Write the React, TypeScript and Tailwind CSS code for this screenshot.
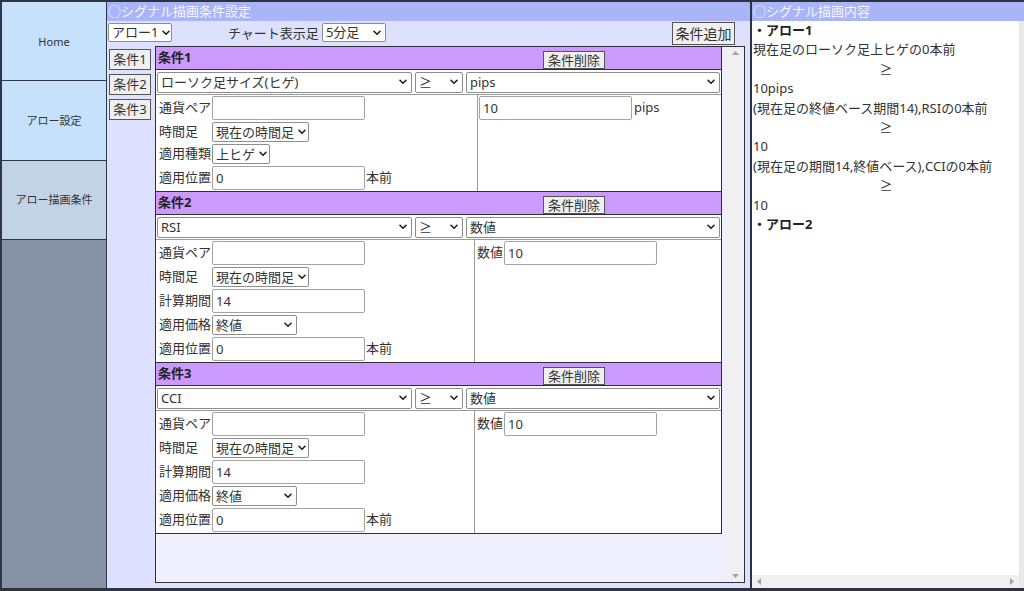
import React from "react";

type Props = { children?: React.ReactNode; className?: string };

function Chevron() {
  return (
    <svg width="8" height="6" viewBox="0 0 8 6" className="shrink-0">
      <path d="M1 1.3 L4 4.3 L7 1.3" fill="none" stroke="#1f1f1f" strokeWidth="1.6" strokeLinecap="round" strokeLinejoin="round" />
    </svg>
  );
}

function Select({ value, className = "" }: { value: string; className?: string }) {
  return (
    <div className={`flex shrink-0 items-center justify-between gap-1 rounded-[2px] border border-[#8d8d8d] bg-white pl-[3px] pr-[4px] text-[13px] leading-none text-[#333] ${className}`}>
      <span className="whitespace-nowrap">{value}</span>
      <Chevron />
    </div>
  );
}

function TextBox({ value = "" }: { value?: string }) {
  return (
    <input
      readOnly
      value={value}
      className="h-[24px] w-[153px] shrink-0 rounded-[2px] border border-[#a3a3a3] bg-white px-[3px] text-[13px] text-[#333] outline-none"
    />
  );
}

function Button({ children, className = "" }: Props) {
  return (
    <button className={`flex items-center justify-center border border-[#555] bg-[#efefef] text-[13px] leading-none text-[#333] ${className}`}>
      {children}
    </button>
  );
}

function Row({ label, children, suffix }: { label: string; children: React.ReactNode; suffix?: string }) {
  return (
    <div className="flex items-center">
      <span className="w-[55px] shrink-0 whitespace-nowrap pl-[2px]">{label}</span>
      {children}
      {suffix && <span className="ml-[1px]">{suffix}</span>}
    </div>
  );
}

function Condition({
  title,
  indicator,
  target,
  leftClass,
  rightClass,
  left,
  right,
}: {
  title: string;
  indicator: string;
  target: string;
  leftClass: string;
  rightClass: string;
  left: React.ReactNode;
  right: React.ReactNode;
}) {
  return (
    <div className="w-[566px] border-b border-r border-[#2f2f3a] bg-white text-[13px] text-[#333]">
      {/* header */}
      <div className="flex h-[23px] items-end border-b border-[#2f2f3a] bg-[#cc99fc]">
        <span className="self-center pl-[2px] font-bold text-[#222]">{title}</span>
        <Button className="ml-auto mr-[116px] h-[18px] w-[62px]">条件削除</Button>
      </div>
      {/* selects */}
      <div className="flex h-[25px] items-center gap-[3px] border-b border-[#9c9c9c] px-[1px]">
        <Select value={indicator} className="h-[21px] w-[255px]" />
        <Select value="≥" className="h-[21px] w-[48px]" />
        <Select value={target} className="h-[21px] w-[254px]" />
      </div>
      {/* body */}
      <div className="flex">
        <div className={`flex flex-col gap-[2px] border-r border-[#9c9c9c] py-[1px] pl-[1px] ${leftClass}`}>{left}</div>
        <div className={`flex-1 py-[1px] ${rightClass}`}>{right}</div>
      </div>
    </div>
  );
}

export default function App() {
  return (
    <div className="flex h-[591px] w-[1024px] overflow-hidden border-b-[3px] border-t-2 border-[#2d3440] [font-family:'Noto_Sans','Noto_Sans_CJK_JP',sans-serif]">
      {/* Sidebar */}
      <aside className="flex w-[107px] shrink-0 flex-col border-l-2 border-r border-[#2d3848] bg-[#8892a6] text-[11px] text-[#333]">
        <div className="flex h-[79px] items-center justify-center border-b border-[#2d3848] bg-[#c6e1fb] pt-[3px]">Home</div>
        <div className="flex h-[80px] items-center justify-center border-b border-[#2d3848] bg-[#c6e1fb] pt-[2px]">アロー設定</div>
        <div className="flex h-[79px] items-center justify-center border-b border-[#2d3848] bg-[#c3d3e6]">アロー描画条件</div>
      </aside>

      {/* Middle */}
      <section className="flex w-[643px] shrink-0 flex-col bg-[#dde1fe] text-[13px] text-[#333]">
        <div className="flex h-[19px] items-center bg-[#a9b5f8] pl-[1px] text-[13px] text-[#f6f6ff]">○シグナル描画条件設定</div>
        <div className="flex h-[25px] items-start pl-[1px]">
          <Select value="アロー1" className="mt-[2px] h-[19px] w-[64px]" />
          <span className="ml-[56px] mt-[3px] whitespace-nowrap leading-[18px]">チャート表示足</span>
          <Select value="5分足" className="ml-[3px] mt-[2px] h-[19px] w-[64px]" />
          <Button className="ml-auto mr-[15px] mt-[1px] h-[23px] w-[63px] text-[14px]">条件追加</Button>
        </div>
        <div className="flex flex-1 pb-[5px]">
          <div className="ml-[2px] flex w-[42px] flex-col gap-[4px] pt-[3px]">
            <Button className="h-[21px] w-[42px]">条件1</Button>
            <Button className="h-[21px] w-[42px]">条件2</Button>
            <Button className="h-[21px] w-[42px]">条件3</Button>
          </div>
          <div className="ml-[4px] flex w-[590px] border border-[#2f2f3a] bg-[#eef0fd]">
            <div className="flex w-[571px] flex-col">
              <Condition
                title="条件1"
                indicator="ローソク足サイズ(ヒゲ)"
                target="pips"
                leftClass="w-[322px]"
                rightClass="pl-[1px]"
                left={
                  <>
                    <Row label="通貨ペア"><TextBox /></Row>
                    <Row label="時間足"><Select value="現在の時間足" className="h-[20px] w-[97px]" /></Row>
                    <Row label="適用種類"><Select value="上ヒゲ" className="h-[20px] w-[58px]" /></Row>
                    <Row label="適用位置" suffix="本前"><TextBox value="0" /></Row>
                  </>
                }
                right={
                  <div className="flex items-center">
                    <TextBox value="10" />
                    <span className="ml-[2px]">pips</span>
                  </div>
                }
              />
              <Condition
                title="条件2"
                indicator="RSI"
                target="数値"
                leftClass="w-[319px]"
                rightClass="pl-[2px]"
                left={
                  <>
                    <Row label="通貨ペア"><TextBox /></Row>
                    <Row label="時間足"><Select value="現在の時間足" className="h-[20px] w-[97px]" /></Row>
                    <Row label="計算期間"><TextBox value="14" /></Row>
                    <Row label="適用価格"><Select value="終値" className="h-[20px] w-[85px]" /></Row>
                    <Row label="適用位置" suffix="本前"><TextBox value="0" /></Row>
                  </>
                }
                right={
                  <div className="flex items-center">
                    <span className="mr-[1px]">数値</span>
                    <TextBox value="10" />
                  </div>
                }
              />
              <Condition
                title="条件3"
                indicator="CCI"
                target="数値"
                leftClass="w-[319px]"
                rightClass="pl-[2px]"
                left={
                  <>
                    <Row label="通貨ペア"><TextBox /></Row>
                    <Row label="時間足"><Select value="現在の時間足" className="h-[20px] w-[97px]" /></Row>
                    <Row label="計算期間"><TextBox value="14" /></Row>
                    <Row label="適用価格"><Select value="終値" className="h-[20px] w-[85px]" /></Row>
                    <Row label="適用位置" suffix="本前"><TextBox value="0" /></Row>
                  </>
                }
                right={
                  <div className="flex items-center">
                    <span className="mr-[1px]">数値</span>
                    <TextBox value="10" />
                  </div>
                }
              />
            </div>
            {/* vertical scrollbar */}
            <div className="flex w-[17px] flex-col items-center justify-between bg-[#f0f0f0] py-[4px]">
              <svg width="7" height="4" viewBox="0 0 7 4"><path d="M0 4 L3.5 0 L7 4 Z" fill="#a3a3a3" /></svg>
              <svg width="7" height="4" viewBox="0 0 7 4"><path d="M0 0 L3.5 4 L7 0 Z" fill="#a3a3a3" /></svg>
            </div>
          </div>
        </div>
      </section>

      {/* Right panel */}
      <section className="flex flex-1 flex-col border-l-2 border-[#2d3440] bg-white text-[13px] text-[#333]">
        <div className="flex h-[19px] items-center bg-[#a9b5f8] pl-[1px] text-[#f6f6ff]">○シグナル描画内容</div>
        <div className="flex flex-1">
          <div className="flex flex-1 flex-col">
            <div className="flex-1 pl-[1px] leading-[19.4px]">
              <div className="font-bold text-[#222]">・アロー1</div>
              <div>現在足のローソク足上ヒゲの0本前</div>
              <div className="text-center">≥</div>
              <div>10pips</div>
              <div>(現在足の終値ベース期間14),RSIの0本前</div>
              <div className="text-center">≥</div>
              <div>10</div>
              <div>(現在足の期間14,終値ベース),CCIの0本前</div>
              <div className="text-center">≥</div>
              <div>10</div>
              <div className="font-bold text-[#222]">・アロー2</div>
            </div>
            {/* horizontal scrollbar */}
            <div className="flex h-[13px] items-center justify-between bg-[#f0f0f0] px-[5px]">
              <svg width="4" height="7" viewBox="0 0 4 7"><path d="M4 0 L0 3.5 L4 7 Z" fill="#a3a3a3" /></svg>
              <svg width="4" height="7" viewBox="0 0 4 7"><path d="M0 0 L4 3.5 L0 7 Z" fill="#a3a3a3" /></svg>
            </div>
          </div>
          <div className="w-[5px] bg-[#e9e9e9]" />
        </div>
      </section>
    </div>
  );
}
